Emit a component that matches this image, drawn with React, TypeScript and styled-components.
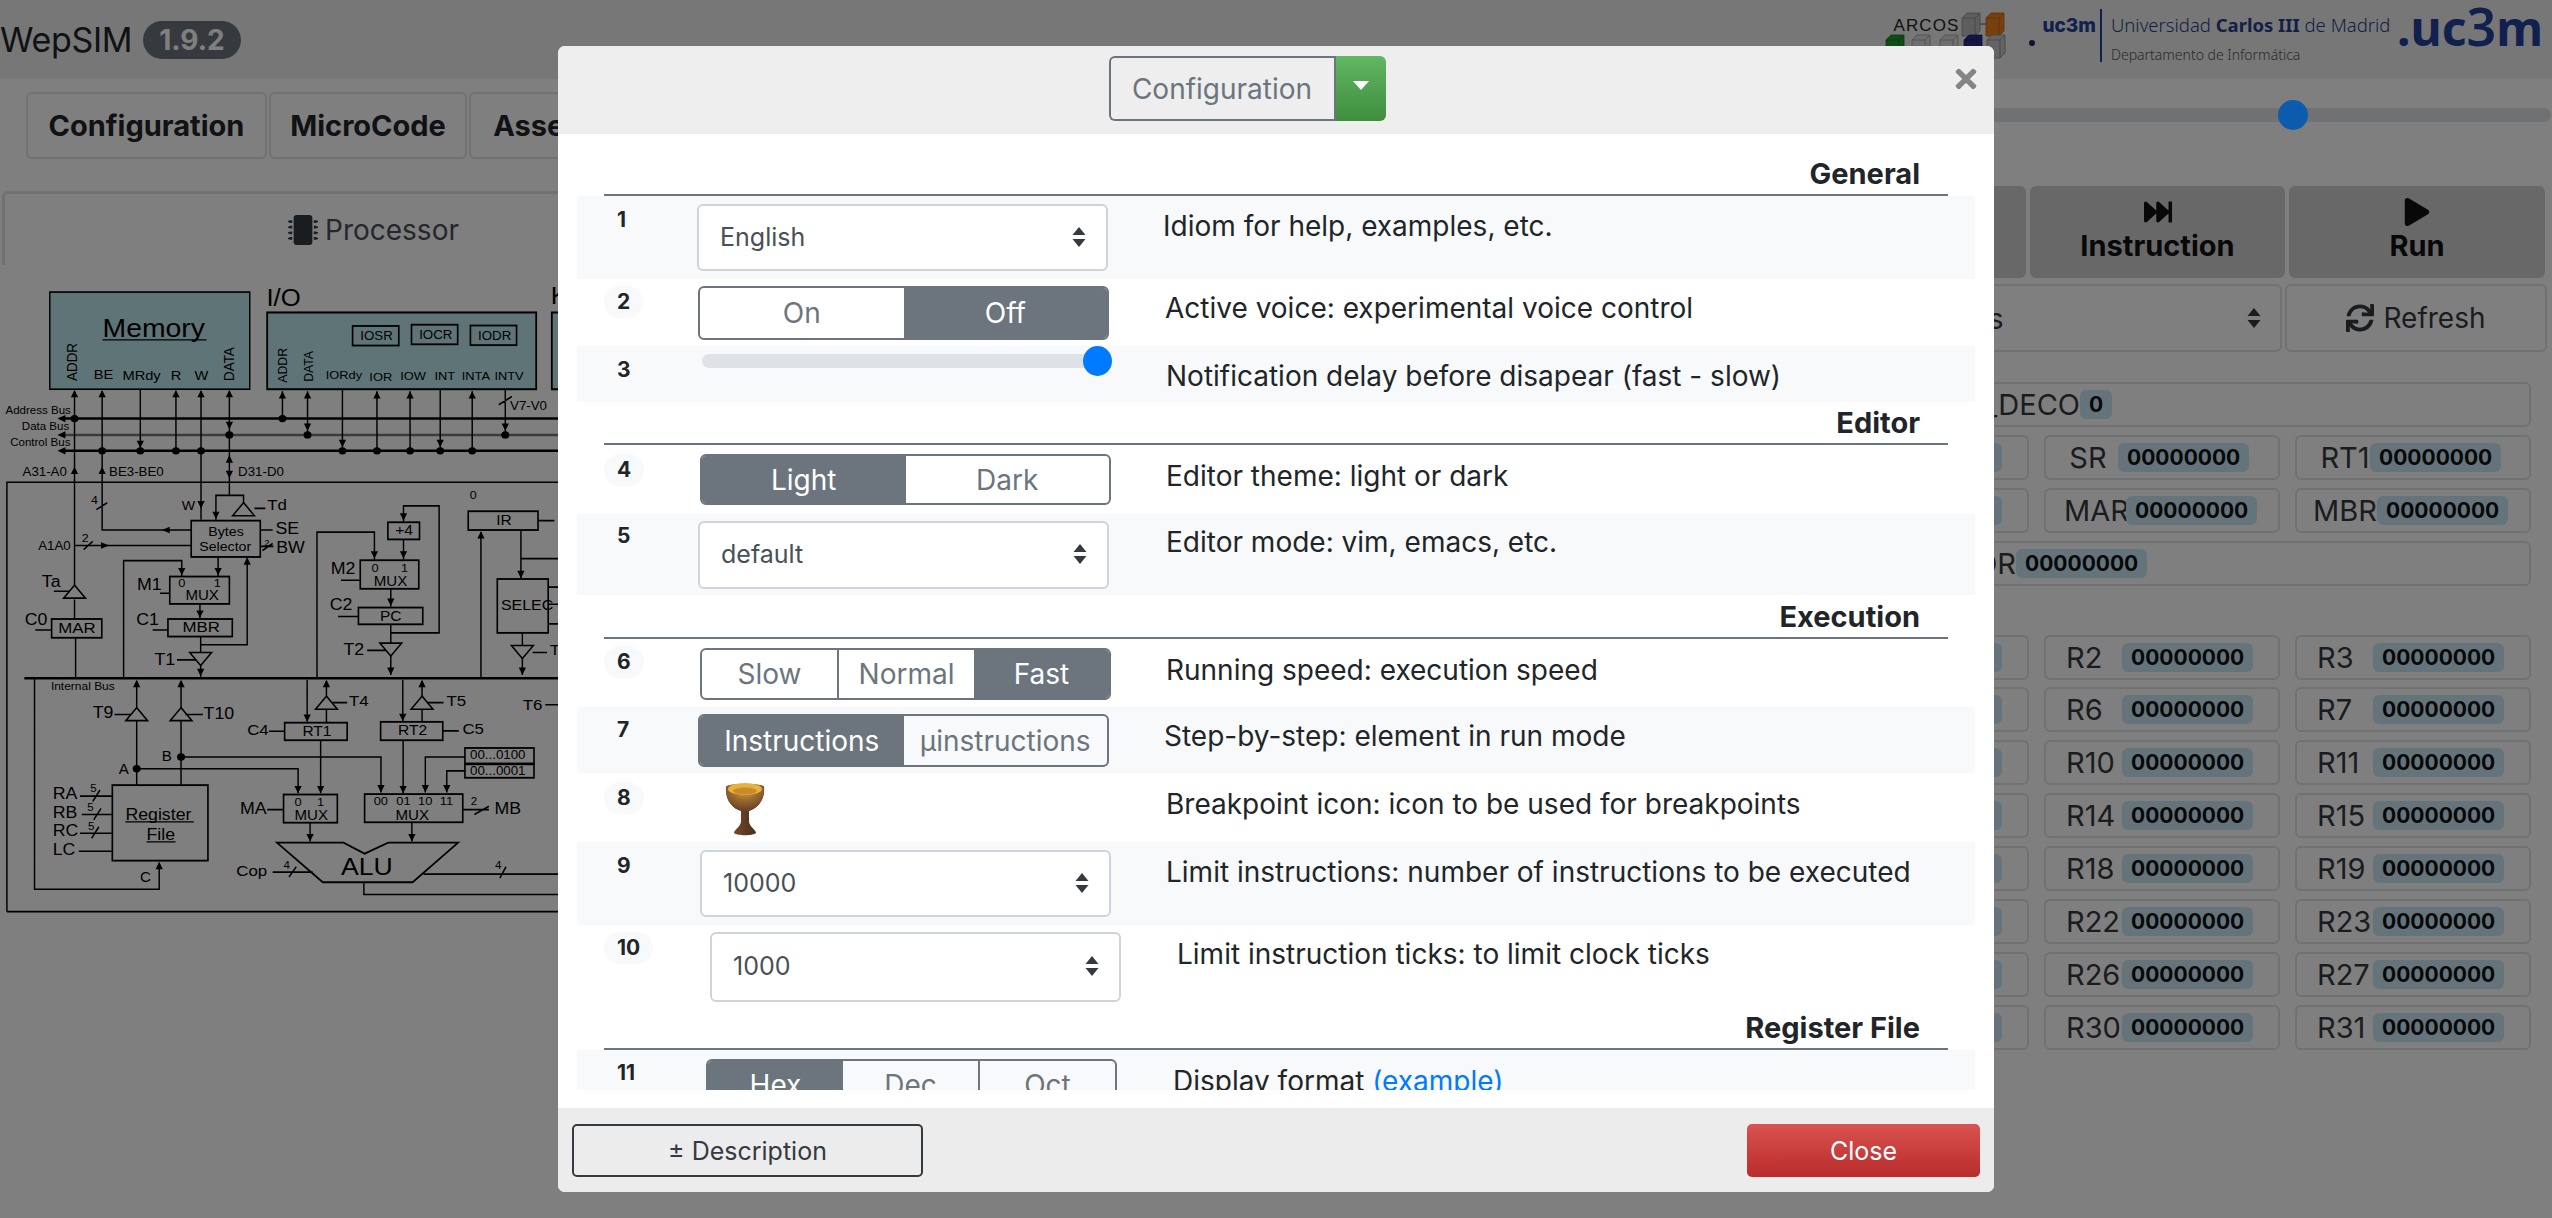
import React from "react";
import styled, { createGlobalStyle } from "styled-components";
import { FaFastForward, FaMicrochip, FaPlay, FaSync, FaTimes } from "react-icons/fa";

const FONT = `Inter, "Liberation Sans", sans-serif`;

const Global = createGlobalStyle`
  html, body { margin: 0; padding: 0; background: #fff; }
  body { font-family: ${FONT}; color: #343a40; overflow: hidden; }
  * { box-sizing: border-box; }
`;

const Page = styled.div`
  width: 2552px;
  height: 1218px;
  overflow: hidden;
  background: #fff;
`;

const TopBar = styled.header`
  height: 79px;
  background: #eee;
  display: flex;
  align-items: flex-start;
  justify-content: space-between;
  padding-right: 9px;
`;

const Title = styled.div`
  display: flex;
  align-items: center;
  gap: 11px;
  height: 79px;
  font-size: 34px;
  color: #212529;
  letter-spacing: -0.3px;
`;

const Version = styled.span`
  background: #6c757d;
  color: #fff;
  font-weight: 700;
  font-size: 28px;
  letter-spacing: 0;
  border-radius: 19px;
  padding: 0 16px;
  height: 38px;
  line-height: 38px;
`;

const Logos = styled.div`
  display: flex;
  align-items: flex-start;
`;

const ArcosBlock = styled.div`
  position: relative;
  width: 136px;
  height: 56px;
  margin-top: 12px;
`;

const ArcosText = styled.span`
  position: absolute;
  left: 0;
  top: 4px;
  font: 17px "Liberation Sans", sans-serif;
  letter-spacing: 1.1px;
  color: #222;
`;

const CubesArt = styled.svg`
  position: absolute;
  left: -10px;
  top: 0;
`;

const Dot = styled.i`
  width: 6px;
  height: 6px;
  border-radius: 50%;
  background: #1c2a55;
  margin: 40px 0 0 0;
`;

const UniMark = styled.span`
  width: 48px;
  font-size: 19px;
  font-weight: 800;
  color: #24409a;
  margin: 14px 10px 0 7px;
`;

const UniDivider = styled.i`
  width: 1.5px;
  height: 53px;
  margin: 9px 9px 0 0;
  background: #24409a;
`;

const UniText = styled.div`
  width: 286px;
  padding-top: 12px;
  font-family: "Noto Sans", sans-serif;
  font-size: 18.5px;
  font-weight: 300;
  color: #2a3f88;
  white-space: nowrap;
  b { font-weight: 700; }
`;

const UniSub = styled.div`
  margin-top: 8px;
  font-size: 14px;
  color: #555;
`;

const BigLogo = styled.div`
  font-family: "Noto Sans", sans-serif;
  font-size: 48px;
  line-height: 60px;
  font-weight: 700;
  color: #24409a;
  margin-top: -4px;
  white-space: nowrap;
  span { font-size: 52px; font-weight: 600; }
`;

const Main = styled.div`
  display: flex;
  height: 1139px;
`;

const LeftPane = styled.div`
  width: 1770px;
  padding-top: 13px;
  overflow: hidden;
`;

const NavRow = styled.nav`
  display: flex;
  gap: 2px;
  padding-left: 26px;
`;

const NavButton = styled.div<{ $w: number }>`
  width: ${(p) => p.$w}px;
  height: 67px;
  border: 2px solid #dee2e6;
  border-radius: 6px;
  display: flex;
  align-items: center;
  justify-content: center;
  font-size: 29px;
  font-weight: 700;
  color: #212529;
  background: #fff;
`;

const TabStrip = styled.div`
  margin: 32px 0 0 2px;
  width: 960px;
  height: 74px;
  border: 3px solid #dee2e6;
  border-bottom: none;
  border-radius: 6px 6px 0 0;
  display: flex;
  align-items: center;
  justify-content: flex-start;
  padding-left: 283px;
  gap: 7px;
  font-size: 28px;
  color: #495057;
  svg { color: #343a40; }
`;

const DiagramArt = styled.svg`
  display: block;
  margin-top: 14px;
  text { font-family: "Liberation Sans", sans-serif; fill: #000; }
`;

const RightPane = styled.div`
  width: 782px;
  padding-top: 29px;
`;

const SliderTrack = styled.div`
  position: relative;
  height: 14px;
  background: #dee2e6;
  border-radius: 7px;
  margin-right: 1px;
`;

const SliderThumb = styled.span`
  position: absolute;
  z-index: 11;
  left: 508px;
  top: -8px;
  width: 30px;
  height: 30px;
  border-radius: 50%;
  background: #0b5cad;
`;

const RunGrid = styled.div`
  display: grid;
  grid-template-columns: 256px 255px 256px;
  gap: 4px;
  margin-top: 64px;
`;

const RunButton = styled.div`
  height: 92px;
  border-radius: 6px;
  background: #d0d0d0;
  color: #111;
  display: flex;
  flex-direction: column;
  align-items: center;
  justify-content: center;
  gap: 3px;
  padding-bottom: 3px;
  font-size: 29px;
  font-weight: 700;
  line-height: 34px;
`;

const ToolRow = styled.div`
  display: flex;
  gap: 3px;
  margin-top: 6px;
  height: 68px;
`;

const ToolSelect = styled.div`
  width: 512px;
  border: 2px solid #dee2e6;
  border-radius: 6px;
  display: flex;
  align-items: center;
  justify-content: space-between;
  padding: 0 19px 0 104px;
  font-size: 29px;
  color: #343a40;
`;

const RefreshButton = styled.div`
  width: 262px;
  border: 2px solid #dee2e6;
  border-radius: 6px;
  display: flex;
  align-items: center;
  justify-content: center;
  gap: 9px;
  font-size: 28px;
  color: #343a40;
`;

const RegGroup = styled.div<{ $top: number }>`
  display: grid;
  grid-template-columns: repeat(3, 236px);
  column-gap: 15px;
  row-gap: 7.86px;
  padding-left: 23px;
  margin-top: ${(p) => p.$top}px;
`;

const RegCell = styled.div<{ $wide?: boolean; $pad?: number }>`
  grid-column: ${(p) => (p.$wide ? "1 / -1" : "auto")};
  height: 45px;
  border: 2px solid #dee2e6;
  border-radius: 6px;
  display: flex;
  align-items: center;
  padding-left: ${(p) => p.$pad ?? 0}px;
  font-size: 29px;
  color: #343a40;
  white-space: nowrap;
`;

const RegLabel = styled.span<{ $w: number; $align?: string }>`
  display: inline-block;
  flex: none;
  width: ${(p) => p.$w}px;
  text-align: ${(p) => p.$align ?? "center"};
`;

const RegValue = styled.span`
  display: inline-block;
  flex: none;
  background: #cbe9f6;
  border-radius: 6px;
  color: #111;
  font-size: 21px;
  font-weight: 700;
  line-height: 29px;
  padding: 0 9px;
`;

const Backdrop = styled.div`
  position: fixed;
  z-index: 10;
  inset: 0;
  background: rgba(0, 0, 0, 0.5);
  padding-top: 46px;
`;

const Modal = styled.section`
  width: 1436px;
  height: 1146px;
  margin: 0 auto;
  background: #fff;
  border-radius: 7px;
  overflow: hidden;
  display: flex;
  flex-direction: column;
`;

const ModalHead = styled.div`
  position: relative;
  height: 88px;
  background: #eee;
  display: flex;
  justify-content: center;
  padding: 10px 58px 0 0;
`;

const HeadLabel = styled.div`
  width: 225px;
  height: 65px;
  border: 2px solid #6c757d;
  border-right: none;
  border-radius: 6px 0 0 6px;
  display: flex;
  align-items: center;
  justify-content: center;
  font-size: 28px;
  color: #6c757d;
`;

const HeadCaret = styled.div`
  width: 52px;
  height: 65px;
  border-radius: 0 6px 6px 0;
  background: linear-gradient(#62b762, #3e8e3e);
  display: flex;
  align-items: center;
  justify-content: center;
  border-left: 2px solid #6c757d;
  &::after {
    content: "";
    border-left: 8px solid transparent;
    border-right: 8px solid transparent;
    border-top: 9px solid #fff;
    margin-bottom: 6px;
  }
`;

const CloseX = styled.span`
  position: absolute;
  right: 13px;
  top: 18px;
  color: #858585;
  line-height: 0;
  filter: drop-shadow(0 1px 0 #fff);
`;

const ModalBody = styled.div`
  flex: 1;
  padding: 19px 19px 18px;
  min-height: 0;
`;

const Scroller = styled.div`
  height: 100%;
  overflow: hidden;
`;

const SectionHead = styled.div<{ $h: number }>`
  height: ${(p) => p.$h}px;
  margin: 0 27px;
  border-bottom: 2px solid #6c757d;
  padding: 0 28px 2px 0;
  text-align: right;
  font-size: 29px;
  font-weight: 700;
  color: #212529;
  display: flex;
  align-items: flex-end;
  justify-content: flex-end;
  line-height: 37px;
`;

const Row = styled.div<{ $h: number; $stripe: boolean; $ctlX: number }>`
  height: ${(p) => p.$h}px;
  background: ${(p) => (p.$stripe ? "#f8f9fa" : "#fff")};
  display: grid;
  grid-template-columns: ${(p) => p.$ctlX}px 411px 1fr;
  align-items: start;
`;

const NumCell = styled.div<{ $top: number }>`
  padding: ${(p) => p.$top}px 0 0 27px;
`;

const NumBadge = styled.span`
  display: inline-block;
  height: 32px;
  min-width: 38px;
  padding: 0 13px;
  border-radius: 16px;
  background: #f8f9fa;
  font-size: 21px;
  font-weight: 700;
  line-height: 32px;
  color: #212529;
`;

const CtlCell = styled.div<{ $top: number }>`
  padding-top: ${(p) => p.$top}px;
`;

const Desc = styled.div<{ $x: number; $top: number }>`
  padding: ${(p) => p.$top}px 0 0 ${(p) => p.$x}px;
  font-size: 28px;
  line-height: 36px;
  color: #212529;
  white-space: nowrap;
  a { color: #007bff; text-decoration: none; }
`;

const SelectBox = styled.div<{ $h: number }>`
  height: ${(p) => p.$h}px;
  border: 2px solid #ced4da;
  border-radius: 6px;
  background: #fff;
  display: flex;
  align-items: center;
  justify-content: space-between;
  padding: 0 20px 2px 21px;
  font-size: 25px;
  color: #495057;
`;

const Toggle = styled.div<{ $h: number }>`
  height: ${(p) => p.$h}px;
  border: 2px solid #6c757d;
  border-radius: 6px;
  display: flex;
  overflow: hidden;
`;

const ToggleItem = styled.div<{ $on: boolean; $sep: boolean }>`
  flex: 1;
  display: flex;
  align-items: center;
  justify-content: center;
  font-size: 28px;
  white-space: nowrap;
  background: ${(p) => (p.$on ? "#6c757d" : "transparent")};
  color: ${(p) => (p.$on ? "#fff" : "#6c757d")};
  border-left: ${(p) => (p.$sep ? "2px solid #6c757d" : "none")};
`;

const RangeTrack = styled.div`
  position: relative;
  height: 14px;
  margin: 0 0 0 2px;
  border-radius: 7px;
  background: #dee2e6;
`;

const RangeThumb = styled.span`
  position: absolute;
  right: -1px;
  top: -8px;
  width: 29px;
  height: 30px;
  border-radius: 50%;
  background: #007bff;
`;

const ChaliceArt = styled.svg`
  display: block;
  margin-left: 27px;
`;

const ModalFoot = styled.div`
  height: 84px;
  background: #ececec;
  display: flex;
  justify-content: space-between;
  align-items: flex-start;
  padding: 16px 14px 0 14px;
`;

const DescButton = styled.div`
  width: 351px;
  height: 53px;
  border: 2px solid #343a40;
  border-radius: 5px;
  display: flex;
  align-items: center;
  justify-content: center;
  font-size: 25px;
  color: #343a40;
`;

const CloseButton = styled.div`
  width: 233px;
  height: 53px;
  border-radius: 5px;
  background: linear-gradient(#d9534f, #b92c2c);
  display: flex;
  align-items: center;
  justify-content: center;
  font-size: 25px;
  color: #fff;
`;

const SelectArrows = () => (
  <svg width="14" height="22" viewBox="0 0 14 22" aria-hidden="true">
    <path d="M7 1 L13.5 9 H.5 Z M7 21 L.5 13 H13.5 Z" fill="#343a40" />
  </svg>
);

const Chalice = () => (
  <ChaliceArt width="40" height="54" viewBox="0 0 40 54">
    <defs>
      <radialGradient id="cup" cx="50%" cy="25%" r="70%">
        <stop offset="0" stopColor="#d9a532" />
        <stop offset="0.5" stopColor="#9a6a30" />
        <stop offset="1" stopColor="#6c4327" />
      </radialGradient>
      <linearGradient id="stem" x1="0" x2="1" y1="0" y2="0">
        <stop offset="0" stopColor="#8a5a30" />
        <stop offset="0.5" stopColor="#5f3a22" />
        <stop offset="1" stopColor="#38261a" />
      </linearGradient>
    </defs>
    <path d="M1 5 C1 1 39 1 39 5 C40 18 33 26 24 29 L24 40 C25 45 31 48 31 51 C28 54 12 54 9 51 C9 48 15 45 16 40 L16 29 C7 26 0 18 1 5 Z" fill="url(#stem)" />
    <path d="M1 5 C1 1 39 1 39 5 C40 18 33 26 24 29 H16 C7 26 0 18 1 5 Z" fill="url(#cup)" />
    <ellipse cx="20" cy="7" rx="17" ry="6" fill="#e8b23a" />
    <ellipse cx="20" cy="9" rx="12" ry="3.5" fill="#c98b2c" />
  </ChaliceArt>
);

const Cubes = () => {
  const cube = (x: number, y: number, c: string, s: string) => (
    <g key={`${x}-${y}`}>
      <path d={`M${x} ${y + 5} l5 -5 h13 v18 l-5 5 h-13 z`} fill={c} stroke={s} strokeWidth="0.8" />
      <path d={`M${x} ${y + 5} h13 v18 M${x + 13} ${y + 5} l5 -5`} fill="none" stroke={s} strokeWidth="0.8" />
    </g>
  );
  return (
    <CubesArt width="144" height="60" viewBox="0 0 144 60">
      {cube(79, 1, "#bdbdbd", "#888")}
      {cube(103, 1, "#f0811e", "#b85f10")}
      <path d="M97 12 H103" stroke="#888" strokeWidth="1.5" />
      {cube(3, 23, "#1e9a2e", "#137020")}
      {cube(29, 23, "#ddd", "#999")}
      {cube(57, 23, "#ddd", "#999")}
      {cube(81, 23, "#2a2d8a", "#1c1e60")}
      {cube(104, 23, "#c8c8c8", "#888")}
    </CubesArt>
  );
};

const WIRES = [
  "M205 275V750M205 785V833M208 879V978M148 765H190M97 860H142",
  "M281 275V615H525M386 272V421M484 275V421M553 275V590",
  "M631 275V530M631 530H594V590M631 530H670V550M700 562H730",
  "M716 615H750M716 655H752M205 653H525",
  "M600 681V728M340 978V690H500V728M440 770H467M550 796V832M420 860H462",
  "M552 876V915M552 945V975M487 933H540M552 896H680V685",
  "M95 978V1495H438V1430",
  "M376 985V1050M376 1082V1240M315 1067H360M498 985V1050M498 1082V1240M510 1067H558",
  "M376 1200H820V1260M498 1171H1048V1258",
  "M220 1267H309M225 1312H309M220 1358H309M217 1402H309",
  "M735 1300H780M1273 1300H1345",
  "M882 1130V1260M740 1108H783M845 982V1085M898 985V1022M898 1054V1087M915 1038H955",
  "M1218 1107H1262M1108 982V1083M1161 985V1022M1161 1054V1085M1175 1038H1220M1109 1130V1260",
  "M1279 1171H1170V1258M1279 1205H1229V1258M853 1332V1378M1133 1332V1378",
  "M750 1453H860M1165 1458H1535M1001 1478V1508H1535",
  "M1480 592H1525M1323 975V620M1433 615V733M1433 685H1535M1508 755H1535M1508 797H1535M1508 845H1535",
  "M1437 867V898M1437 930V970M1465 915H1505",
  "M872 978V620H1030V687M938 738H991M1110 594V556H1208V867H1075M1110 638V687M1075 759V803M930 827H986",
  "M1075 846V892M1075 923V970M1010 910H1060M1500 1043H1535",
  "M777 275V342M846 275V382M942 272V421M1037 275V421M1128 275V421M1211 272V421M1299 275V421M1390 272V382",
  "M265 565L295 548M230 663L255 643M1372 308L1408 288M722 665L750 648",
  "M255 1280L275 1252M258 1325L278 1297M252 1370L272 1342M795 1465L815 1440M1305 1312L1345 1292M1375 1468L1392 1440",
];

const BOXES: [number, number, number, number][] = [
  [526, 592, 190, 89], [467, 729, 164, 67], [462, 833, 177, 43], [142, 833, 138, 46],
  [309, 1240, 263, 185], [780, 1263, 148, 69], [1003, 1262, 270, 69], [783, 1087, 172, 43],
  [1047, 1085, 171, 45], [1279, 1149, 190, 38], [1279, 1189, 190, 33], [1288, 569, 192, 46],
  [1368, 735, 140, 132], [991, 689, 161, 70], [1067, 596, 87, 42], [986, 805, 177, 41],
  [970, 115, 127, 48], [1132, 112, 127, 48], [1294, 114, 127, 48],
];

const UP: [number, number][] = [
  [205, 282], [281, 282], [484, 282], [553, 282], [631, 282], [777, 285], [846, 285], [1037, 285], [1128, 285], [1299, 285],
  [631, 442], [205, 470], [281, 470], [680, 692], [376, 992], [498, 992], [898, 992], [1161, 992], [1323, 628], [438, 1438],
];
const DOWN: [number, number][] = [
  [386, 414], [631, 368], [846, 372], [942, 412], [1211, 412], [1390, 372], [631, 488], [553, 562], [594, 588], [600, 726],
  [500, 726], [550, 830], [552, 973], [1433, 733], [1437, 970], [1030, 685], [1110, 592], [1110, 685], [1075, 801], [1075, 970],
  [845, 1085], [1108, 1083], [882, 1260], [820, 1260], [1048, 1258], [1109, 1260], [1170, 1258], [1229, 1258], [853, 1378], [1133, 1378],
];
const DOTS: [number, number][] = [
  [205, 342], [777, 342], [631, 382], [846, 382], [1390, 382], [281, 421], [386, 421], [484, 421], [553, 421],
  [942, 421], [1037, 421], [1128, 421], [1211, 421], [1299, 421], [376, 1200], [498, 1171],
];
const TRI_UP: [number, number][] = [[205, 750], [670, 548], [376, 1050], [498, 1050], [898, 1022], [1161, 1022]];
const TRI_DOWN: [number, number][] = [[552, 915], [1075, 892], [1437, 898]];

const LABELS: [string, number, number, number][] = [
  ["BE", 258, 245, 33], ["MRdy", 337, 248, 33], ["R", 470, 248, 33], ["W", 535, 248, 33],
  ["I/O", 733, 65, 58], ["K", 1515, 62, 58],
  ["IOSR", 991, 150, 30], ["IOCR", 1153, 147, 30], ["IODR", 1315, 149, 30],
  ["IORdy", 896, 245, 29], ["IOR", 1016, 250, 29], ["IOW", 1101, 248, 29], ["INT", 1195, 248, 29], ["INTA", 1270, 248, 29], ["INTV", 1360, 248, 29],
  ["Address Bus", 15, 330, 26], ["Data Bus", 60, 369, 26], ["Control Bus", 28, 410, 26],
  ["A31-A0", 62, 482, 30], ["BE3-BE0", 300, 482, 30], ["D31-D0", 655, 482, 30], ["V7-V0", 1403, 320, 30],
  ["Td", 735, 566, 38], ["SE", 758, 625, 40], ["BW", 760, 672, 40], ["W", 500, 567, 32], ["4", 250, 552, 28], ["2", 225, 645, 28], ["2", 727, 655, 22],
  ["Bytes", 573, 630, 32], ["Selector", 548, 666, 32],
  ["A1A0", 105, 663, 30], ["Ta", 115, 755, 40], ["C0", 68, 848, 40], ["M1", 377, 762, 40], ["C1", 375, 848, 40], ["T1", 425, 945, 40],
  ["0", 490, 755, 29], ["1", 588, 755, 29], ["MUX", 510, 786, 34], ["MBR", 502, 866, 38], ["MAR", 160, 867, 38],
  ["Internal Bus", 140, 1008, 27], ["T9", 255, 1075, 40], ["T10", 560, 1077, 40], ["A", 327, 1212, 34], ["B", 445, 1182, 34], ["C", 385, 1477, 34],
  ["RA", 145, 1275, 40], ["RB", 145, 1320, 40], ["RC", 145, 1365, 40], ["LC", 145, 1410, 40],
  ["5", 248, 1258, 26], ["5", 240, 1304, 26], ["5", 242, 1350, 26],
  ["MA", 660, 1310, 40], ["0", 810, 1290, 29], ["1", 872, 1290, 29], ["MUX", 810, 1325, 34],
  ["00", 1028, 1288, 29], ["01", 1090, 1288, 29], ["10", 1150, 1288, 29], ["11", 1210, 1288, 29], ["MUX", 1088, 1325, 34],
  ["2", 1295, 1288, 26], ["MB", 1360, 1310, 40], ["Cop", 650, 1462, 38], ["4", 780, 1445, 26], ["4", 1362, 1445, 26], ["ALU", 938, 1460, 60],
  ["C4", 680, 1118, 38], ["RT1", 832, 1120, 35], ["T4", 960, 1045, 38], ["C5", 1272, 1115, 38], ["RT2", 1095, 1118, 35], ["T5", 1228, 1045, 38], ["T6", 1438, 1055, 38],
  ["00...0100", 1293, 1175, 30], ["00...0001", 1293, 1215, 30],
  ["0", 1292, 538, 28], ["IR", 1365, 603, 35], ["SELEC", 1378, 812, 36], ["T", 1512, 922, 38],
  ["M2", 910, 722, 40], ["0", 1022, 717, 29], ["1", 1103, 717, 29], ["MUX", 1028, 752, 34], ["+4", 1087, 628, 35], ["PC", 1045, 837, 35], ["C2", 907, 812, 40], ["T2", 945, 920, 40],
  ["Memory", 282, 141, 64], ["Register", 345, 1325, 40], ["File", 403, 1374, 40],
];

const Diagram = () => (
  <DiagramArt width="570" height="640" viewBox="0 0 1568 1568" preserveAspectRatio="none">
    <rect x="137" y="32" width="550" height="238" fill="#bfe8ee" stroke="#000" strokeWidth="4" />
    <rect x="735" y="82" width="740" height="188" fill="#bfe8ee" stroke="#000" strokeWidth="5" />
    <path d="M1535 82H1518V270H1535" fill="#bfe8ee" stroke="#000" strokeWidth="5" />
    <path d="M282 149H568M345 1330H533M403 1379H483" stroke="#000" strokeWidth="3" />
    <text transform="translate(213 250) rotate(-90) scale(1 1.22)" fontSize="33">ADDR</text>
    <text transform="translate(643 250) rotate(-90) scale(1 1.22)" fontSize="33">DATA</text>
    <text transform="translate(790 254) rotate(-90) scale(1 1.22)" fontSize="30">ADDR</text>
    <text transform="translate(860 252) rotate(-90) scale(1 1.22)" fontSize="30">DATA</text>
    <path d="M19 1550V498H1535M19 1550H1535" fill="none" stroke="#000" strokeWidth="4" />
    <path d="M165 342H1535M165 421H1535" stroke="#000" strokeWidth="6" />
    <path d="M165 382H1535" stroke="#777" strokeWidth="6" />
    <path d="M67 978H1535" stroke="#000" strokeWidth="6" />
    <path d="M158 342l22 -9v18zM158 382l22 -9v18zM158 421l22 -9v18z" fill="#000" />
    <path d="M445 615l22 -8v16zM300 653l-22 -8v16z" fill="#000" />
    <path d={WIRES.join("")} fill="none" stroke="#000" strokeWidth="4" />
    {BOXES.map(([x, y, w, h]) => (
      <rect key={`${x}-${y}`} x={x} y={y} width={w} height={h} fill="none" stroke="#000" strokeWidth="4.5" />
    ))}
    <path d="M762 1381H945L1003 1408L1068 1381H1260L1135 1478H888Z" fill="none" stroke="#000" strokeWidth="4.5" />
    {UP.map(([x, y]) => <path key={`${x}-${y}`} d={`M${x} ${y - 10}l10 18h-20z`} fill="#000" />)}
    {DOWN.map(([x, y]) => <path key={`${x}-${y}`} d={`M${x} ${y}l10 -18h-20z`} fill="#000" />)}
    {DOTS.map(([x, y]) => <ellipse key={`${x}-${y}`} cx={x} cy={y} rx="11" ry="9" fill="#000" />)}
    {TRI_UP.map(([x, y]) => <path key={`${x}-${y}`} d={`M${x} ${y}l30 32h-60z`} fill="none" stroke="#000" strokeWidth="4" />)}
    {TRI_DOWN.map(([x, y]) => <path key={`${x}-${y}`} d={`M${x - 30} ${y}h60l-30 32z`} fill="none" stroke="#000" strokeWidth="4" />)}
    {LABELS.map(([t, x, y, s]) => (
      <text key={`${t}-${x}-${y}`} transform={`translate(${x} ${y}) scale(1.22 1)`} fontSize={s}>{t}</text>
    ))}
  </DiagramArt>
);

type Reg = { label: string; pad: number; w: number };
const SPECIAL: Reg[] = [
  { label: "PC", pad: 0, w: 76 }, { label: "SR", pad: 12, w: 60 }, { label: "RT1", pad: 23, w: 50 },
  { label: "IR", pad: 0, w: 76 }, { label: "MAR", pad: 18, w: 62 }, { label: "MBR", pad: 16, w: 64 },
];

const REG_ROWS: string[] = Array.from({ length: 32 }, (_, i) => `R${i}`).filter((_, i) => i % 4 !== 0);

const Registers = () => (
  <>
    <RegGroup $top={30}>
      <RegCell $wide>
        <RegLabel $w={285} $align="right">ALU_DECO</RegLabel>
        <RegValue>0</RegValue>
      </RegCell>
      {SPECIAL.map((r) => (
        <RegCell key={r.label} $pad={r.pad}>
          <RegLabel $w={r.w}>{r.label}</RegLabel>
          <RegValue>00000000</RegValue>
        </RegCell>
      ))}
      <RegCell $wide>
        <RegLabel $w={221} $align="right">VECTOR</RegLabel>
        <RegValue>00000000</RegValue>
      </RegCell>
    </RegGroup>
    <RegGroup $top={49}>
      {REG_ROWS.map((n) => (
        <RegCell key={n} $pad={20}>
          <RegLabel $w={56} $align="left">{n}</RegLabel>
          <RegValue>00000000</RegValue>
        </RegCell>
      ))}
    </RegGroup>
  </>
);

type Config = {
  n: number;
  h: number;
  stripe: boolean;
  numTop: number;
  ctlX: number;
  ctlTop: number;
  descX: number;
  descTop: number;
  desc: React.ReactNode;
  ctl: React.ReactNode;
};

const Select = ({ value, h }: { value: string; h: number }) => (
  <SelectBox $h={h}>
    {value}
    <SelectArrows />
  </SelectBox>
);

const Segments = ({ items, on, h }: { items: string[]; on: number; h: number }) => (
  <Toggle $h={h}>
    {items.map((t, i) => (
      <ToggleItem key={t} $on={i === on} $sep={i > 0 && i !== on && i - 1 !== on}>
        {t}
      </ToggleItem>
    ))}
  </Toggle>
);

const ROWS1: Config[] = [
  { n: 1, h: 83, stripe: true, numTop: 8, ctlX: 120, ctlTop: 8, descX: 55, descTop: 12, desc: "Idiom for help, examples, etc.", ctl: <Select value="English" h={67} /> },
  { n: 2, h: 67, stripe: false, numTop: 7, ctlX: 121, ctlTop: 7, descX: 56, descTop: 11, desc: "Active voice: experimental voice control", ctl: <Segments items={["On", "Off"]} on={1} h={54} /> },
  { n: 3, h: 56, stripe: true, numTop: 8, ctlX: 123, ctlTop: 8, descX: 55, descTop: 12, desc: "Notification delay before disapear (fast - slow)", ctl: <RangeTrack><RangeThumb /></RangeTrack> },
];
const ROWS2: Config[] = [
  { n: 4, h: 69, stripe: false, numTop: 9, ctlX: 123, ctlTop: 9, descX: 55, descTop: 13, desc: "Editor theme: light or dark", ctl: <Segments items={["Light", "Dark"]} on={0} h={51} /> },
  { n: 5, h: 81, stripe: true, numTop: 6, ctlX: 121, ctlTop: 7, descX: 57, descTop: 10, desc: "Editor mode: vim, emacs, etc.", ctl: <Select value="default" h={68} /> },
];
const ROWS3: Config[] = [
  { n: 6, h: 68, stripe: false, numTop: 7, ctlX: 123, ctlTop: 9, descX: 55, descTop: 13, desc: "Running speed: execution speed", ctl: <Segments items={["Slow", "Normal", "Fast"]} on={2} h={52} /> },
  { n: 7, h: 66, stripe: true, numTop: 7, ctlX: 121, ctlTop: 7, descX: 55, descTop: 11, desc: "Step-by-step: element in run mode", ctl: <Segments items={["Instructions", "µinstructions"]} on={0} h={53} /> },
  { n: 8, h: 69, stripe: false, numTop: 9, ctlX: 121, ctlTop: 9, descX: 57, descTop: 13, desc: "Breakpoint icon: icon to be used for breakpoints", ctl: <Chalice /> },
  { n: 9, h: 83, stripe: true, numTop: 8, ctlX: 123, ctlTop: 8, descX: 55, descTop: 12, desc: "Limit instructions: number of instructions to be executed", ctl: <Select value="10000" h={67} /> },
  { n: 10, h: 85, stripe: false, numTop: 7, ctlX: 133, ctlTop: 7, descX: 56, descTop: 11, desc: "Limit instruction ticks: to limit clock ticks", ctl: <Select value="1000" h={70} /> },
];
const ROWS4: Config[] = [
  { n: 11, h: 60, stripe: true, numTop: 7, ctlX: 129, ctlTop: 9, descX: 56, descTop: 13, desc: <>Display format <a href="#example">(example)</a></>, ctl: <Segments items={["Hex", "Dec", "Oct"]} on={0} h={52} /> },
];

const ConfigRows = ({ rows }: { rows: Config[] }) => (
  <>
    {rows.map((r) => (
      <Row key={r.n} $h={r.h} $stripe={r.stripe} $ctlX={r.ctlX}>
        <NumCell $top={r.numTop}><NumBadge>{r.n}</NumBadge></NumCell>
        <CtlCell $top={r.ctlTop}>{r.ctl}</CtlCell>
        <Desc $x={r.descX} $top={r.descTop}>{r.desc}</Desc>
      </Row>
    ))}
  </>
);

export default function App() {
  return (
    <Page>
      <Global />
      <TopBar>
        <Title>
          WepSIM<Version>1.9.2</Version>
        </Title>
        <Logos>
          <ArcosBlock>
            <Cubes />
            <ArcosText>ARCOS</ArcosText>
          </ArcosBlock>
          <Dot />
          <UniMark>uc3m</UniMark>
          <UniDivider />
          <UniText>
            Universidad <b>Carlos III</b> de Madrid
            <UniSub>Departamento de Informática</UniSub>
          </UniText>
          <BigLogo>.uc<span>3</span>m</BigLogo>
        </Logos>
      </TopBar>
      <Main>
        <LeftPane>
          <NavRow>
            <NavButton $w={241}>Configuration</NavButton>
            <NavButton $w={198}>MicroCode</NavButton>
            <NavButton $w={190}>Assembly</NavButton>
          </NavRow>
          <TabStrip>
            <FaMicrochip size={30} />
            Processor
          </TabStrip>
          <Diagram />
        </LeftPane>
        <RightPane>
          <SliderTrack>
            <SliderThumb />
          </SliderTrack>
          <RunGrid>
            <RunButton>µInstruction</RunButton>
            <RunButton>
              <FaFastForward size={28} />
              Instruction
            </RunButton>
            <RunButton>
              <FaPlay size={28} />
              Run
            </RunButton>
          </RunGrid>
          <ToolRow>
            <ToolSelect>
              Registers
              <SelectArrows />
            </ToolSelect>
            <RefreshButton>
              <FaSync size={28} />
              Refresh
            </RefreshButton>
          </ToolRow>
          <Registers />
        </RightPane>
      </Main>
      <Backdrop>
        <Modal>
          <ModalHead>
            <HeadLabel>Configuration</HeadLabel>
            <HeadCaret />
            <CloseX><FaTimes size={30} /></CloseX>
          </ModalHead>
          <ModalBody>
            <Scroller>
              <SectionHead $h={43}>General</SectionHead>
              <ConfigRows rows={ROWS1} />
              <SectionHead $h={43}>Editor</SectionHead>
              <ConfigRows rows={ROWS2} />
              <SectionHead $h={44}>Execution</SectionHead>
              <ConfigRows rows={ROWS3} />
              <SectionHead $h={40}>Register File</SectionHead>
              <ConfigRows rows={ROWS4} />
            </Scroller>
          </ModalBody>
          <ModalFoot>
            <DescButton>± Description</DescButton>
            <CloseButton>Close</CloseButton>
          </ModalFoot>
        </Modal>
      </Backdrop>
    </Page>
  );
}
